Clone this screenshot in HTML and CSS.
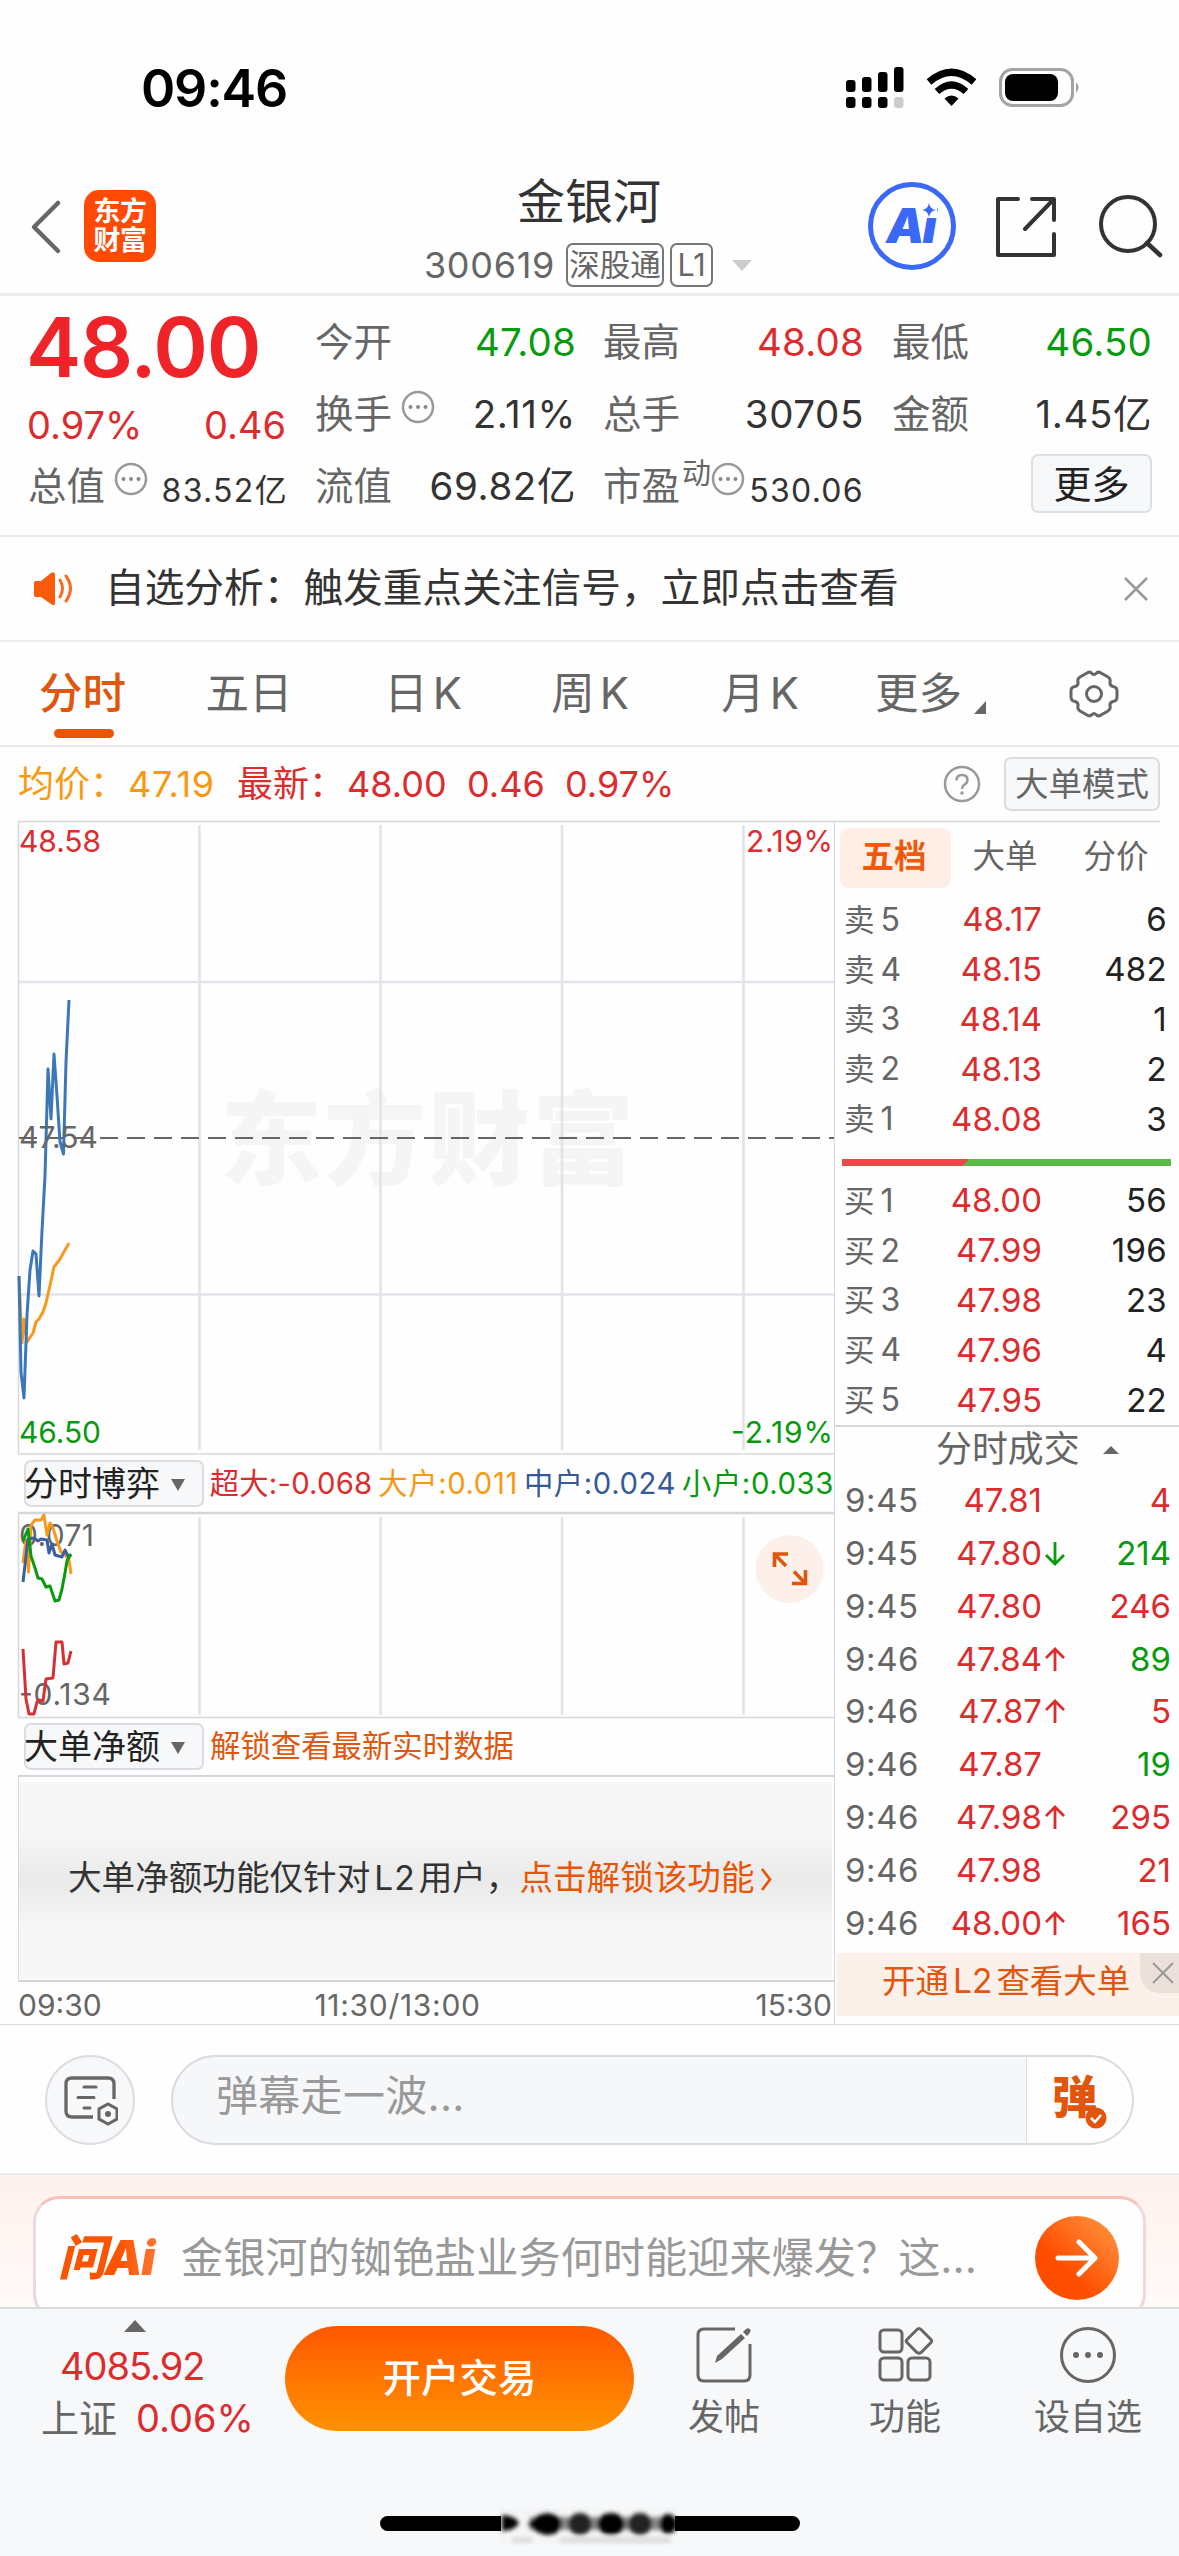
FILE: index.html
```html
<!DOCTYPE html>
<html lang="zh-CN">
<head>
<meta charset="utf-8">
<title>金银河 300619</title>
<link rel="stylesheet" href="styles.css">
</head>
<body>
<div class="status">
  <span class="clock">09:46</span>
  <svg class="status-icons" width="232" height="46" viewBox="844 65 232 46">
    <g fill="#000">
      <rect x="846" y="80" width="9.500" height="12" rx="3"/><rect x="862" y="77" width="9.500" height="15" rx="3"/><rect x="878" y="72" width="9.500" height="20" rx="3"/><rect x="894" y="67" width="9.500" height="25" rx="3"/>
      <rect x="846" y="97" width="9.500" height="11" rx="3"/><rect x="862" y="97" width="9.500" height="11" rx="3"/><rect x="878" y="97" width="9.500" height="11" rx="3"/>
      <rect x="894" y="97" width="9.500" height="11" rx="3" fill="#ccc"/>
      <path d="M951.500 106 L944.500 98.500 Q951.500 92.500 958.500 98.500Z"/>
    </g>
    <path d="M929 82 Q951.500 62.500 974 82M937 91.500 Q951.500 78.500 966 91.500" fill="none" stroke="#000" stroke-width="7"/>
    <rect x="1000.500" y="69.500" width="72" height="36" rx="12" fill="none" stroke="#a3a3a3" stroke-width="3"/>
    <rect x="1005" y="74" width="53" height="27" rx="8"/>
    <path d="M1076 82 Q1081 87.500 1076 93Z" fill="#a3a3a3"/>
  </svg>
</div>

<header class="nav">
  <svg width="32" height="56" viewBox="30 199 32 56"><path d="M58 203 L34 227 L58 251" fill="none" stroke="#666" stroke-width="4.500" stroke-linecap="round" stroke-linejoin="round"/></svg>
  <div class="brand"><span>东方</span><span>财富</span></div>
  <div class="title">
    <h1>金银河</h1>
    <div class="code"><span class="num">300619</span><span class="tag">深股通</span><span class="tag l1">L1</span><i class="tri-down light"></i></div>
  </div>
  <div class="ai-badge"><span>Ai</span>
    <svg width="14" height="14" viewBox="0 0 14 14"><path d="M7 0Q8 6 14 7Q8 8 7 14Q6 8 0 7Q6 6 7 0Z" fill="#3b69f6"/></svg>
  </div>
  <svg class="share" width="64" height="64" viewBox="994 195 64 64"><path d="M1018 199H998V255H1054V234M1032 199H1054V220M1053 200L1025 229" fill="none" stroke="#333" stroke-width="4" stroke-linecap="round" stroke-linejoin="round"/></svg>
  <svg class="search" width="66" height="66" viewBox="1097 192 66 66"><circle cx="1128" cy="224" r="27" fill="none" stroke="#333" stroke-width="4"/><path d="M1147 243L1160 255" stroke="#333" stroke-width="4.500" stroke-linecap="round"/></svg>
</header>

<section class="quote">
  <div class="main">
    <div class="price">48.00</div>
    <div class="change"><span>0.97%</span><span>0.46</span></div>
    <div class="cell cap"><span>总值</span><svg class="dots" width="34" height="34"><use href="#more"/></svg><b class="small">83.52亿</b></div>
  </div>
  <div class="col">
    <div class="cell"><span>今开</span><b class="down">47.08</b></div>
    <div class="cell"><span>换手</span><svg class="dots" width="34" height="34"><use href="#more"/></svg><b>2.11%</b></div>
    <div class="cell"><span>流值</span><b>69.82亿</b></div>
  </div>
  <div class="col">
    <div class="cell"><span>最高</span><b class="up">48.08</b></div>
    <div class="cell"><span>总手</span><b>30705</b></div>
    <div class="cell"><span>市盈</span><em>动</em><svg class="dots near" width="34" height="34"><use href="#more"/></svg><b class="small">530.06</b></div>
  </div>
  <div class="col">
    <div class="cell"><span>最低</span><b class="down">46.50</b></div>
    <div class="cell"><span>金额</span><b>1.45亿</b></div>
    <div class="cell"><button class="more">更多</button></div>
  </div>
</section>

<svg class="defs" width="0" height="0"><symbol id="more" viewBox="0 0 34 34"><circle cx="17" cy="17" r="15" fill="none" stroke="#999" stroke-width="2.500"/><g fill="#888"><circle cx="9.500" cy="17" r="2"/><circle cx="17" cy="17" r="2"/><circle cx="24.500" cy="17" r="2"/></g></symbol></svg>

<section class="notice">
  <svg width="42" height="36" viewBox="32 571 42 36"><path d="M34 583Q34 581 36 581H41L51 573Q55 571 55 575V603Q55 607 51 604L41 597H36Q34 597 34 595Z" fill="#fa5a0a"/><path d="M60 580Q65 588.500 60 597M66 576Q75 588.500 66 601" fill="none" stroke="#fa6a20" stroke-width="3" stroke-linecap="round"/></svg>
  <span>自选分析：触发重点关注信号，立即点击查看</span>
  <svg width="26" height="26" viewBox="0 0 26 26"><path d="M2 2L24 24M24 2L2 24" stroke="#999" stroke-width="2.500"/></svg>
</section>

<nav class="tabs">
  <span class="on">分时</span><span>五日</span><span>日<i>K</i></span><span>周<i>K</i></span><span>月<i>K</i></span>
  <span class="with-corner">更多<svg width="12" height="13"><path d="M12 0V13H0Z" fill="#666"/></svg></span>
  <span><svg width="52" height="48" viewBox="-26 -24 52 48"><path d="M-7 -21Q-4 -23 -2 -20.500Q0 -18.500 2 -20.500Q4 -23 7 -21L14 -17Q17 -15 16 -12Q15.500 -8.500 19 -7.500Q23 -7 23 -3V3Q23 7 19 7.500Q15.500 8.500 16 12Q17 15 14 17L7 21Q4 23 2 20.500Q0 18.500 -2 20.500Q-4 23 -7 21L-14 17Q-17 15 -16 12Q-15.500 8.500 -19 7.500Q-23 7 -23 3V-3Q-23 -7 -19 -7.500Q-15.500 -8.500 -16 -12Q-17 -15 -14 -17Z" fill="none" stroke="#666" stroke-width="3"/><circle r="7.500" fill="none" stroke="#666" stroke-width="3"/></svg></span>
</nav>

<section class="summary">
  <span class="avg">均价：</span><span class="avg v1">47.19</span>
  <span class="up">最新：</span><span class="up v2">48.00</span><span class="up v3">0.46</span><span class="up v4">0.97%</span>
  <svg class="help" width="38" height="38" viewBox="0 0 38 38"><circle cx="19" cy="19" r="17" fill="none" stroke="#999" stroke-width="2.500"/><path d="M13.500 15.500Q13.500 10 19 10Q24.500 10 24.500 15Q24.500 18 21 20Q19 21.500 19 24" fill="none" stroke="#999" stroke-width="2.500"/><circle cx="19" cy="28" r="1.700" fill="#999"/></svg>
  <button class="mode">大单模式</button>
</section>

<main class="board">
  <div class="charts">
    <svg class="chart" width="835" height="634" viewBox="0 821 835 634">
      <text class="mark" x="220" y="1177" textLength="414">东方财富</text>
      <g stroke="#e2e3ea" stroke-width="2.500"><path d="M199.500 825V1450M380.500 825V1450M562 825V1450M743.500 825V1450M19 982H834M19 1294.500H834"/></g>
      <path d="M18.500 1455V821.500H1160M18 1454H835" fill="none" stroke="#d6d8dc" stroke-width="1.500"/>
      <path d="M19 1138H834" stroke="#666" stroke-width="2" stroke-dasharray="18 9"/>
      <polyline class="line" stroke="#f79a1c" points="19,1276 22,1343 24,1319 27,1342 33,1333 36,1322 39,1319 43,1312 46,1303 51,1281 54,1267 60,1259 69,1243"/>
      <polyline class="line" stroke="#3a78b8" points="19,1276 21,1372 24,1398 27,1315 30,1270 33,1251 36,1254 39,1296 42,1231 45,1176 48,1069 51,1119 54,1054 57,1096 60,1142 63.500,1154 66,1062 69,1000"/>
      <text class="axis up" x="19" y="851.500" textLength="82">48.58</text>
      <text class="axis" x="19" y="1147.500" textLength="79">47.54</text>
      <text class="axis down" x="19" y="1443" textLength="82">46.50</text>
      <text class="axis up" x="746" y="851.500" textLength="87">2.19%</text>
      <text class="axis down" x="731" y="1443" textLength="102">-2.19%</text>
    </svg>
    <div class="legend">
      <span class="select">分时博弈<i class="tri-down"></i></span>
      <span class="up">超大:-0.068</span><span class="gold">大户:0.011</span><span class="navy">中户:0.024</span><span class="down">小户:0.033</span>
    </div>
    <svg class="chart" width="835" height="206" viewBox="0 1512 835 206">
      <path d="M18 1513H835" stroke="#d3d5d8" stroke-width="2.500"/>
      <path d="M18.500 1513V1717.500H835" fill="none" stroke="#d6d8dc" stroke-width="1.500"/>
      <path d="M199.500 1517V1715M380.500 1517V1715M562 1517V1715M743.500 1517V1715" stroke="#e2e3ea" stroke-width="2.500"/>
      <text class="axis" x="19" y="1546" textLength="75">0.071</text>
      <text class="axis" x="19" y="1704.500" textLength="92">-0.134</text>
      <polyline class="line" stroke="#f79a1c" points="23,1563 26,1540 28.500,1572 31,1525 35,1520 41,1520 44,1515 47,1535 50,1523 53,1528 57,1541 61,1552 66,1556 69,1560 71,1574"/>
      <polyline class="line" stroke="#3a60a0" points="23,1582 28,1539 34,1538 38,1541 41,1539 47,1540 49,1553 52,1544 55,1555 62,1557 65,1550 68,1556 71,1555"/>
      <polyline class="line" stroke="#0a9a10" points="23,1541 28,1529 31,1556 35,1568 38,1578 42,1579 46,1587 50,1586 55,1601 59,1600 62,1589 65,1573 67,1561 71,1554"/>
      <polyline class="line" stroke="#d63032" points="23,1649 26,1699 29,1714 34,1714 37,1702 39,1700 43,1701 46,1679 53,1678 56,1642 62,1642 64,1664 68,1663 71,1651"/>
      <circle cx="789.500" cy="1569" r="34" fill="#fdf0ea"/>
      <path d="M774.500 1567V1554H788M775 1554.500L786 1566M805.500 1570V1583.500H792M805 1583L794 1571.500" fill="none" stroke="#e0560d" stroke-width="3.600"/>
    </svg>
    <div class="legend">
      <span class="select">大单净额<i class="tri-down"></i></span>
      <span class="unlock">解锁查看最新实时数据</span>
    </div>
    <div class="locked"><div><span>大单净额功能仅针对<i>L2</i>用户，</span><a>点击解锁该功能</a><svg width="13" height="25" viewBox="0 0 13 25"><path d="M2 2L10 12.500L2 23" fill="none" stroke="#ea5504" stroke-width="2.700"/></svg></div></div>
    <div class="times"><span>09:30</span><span class="noon">11:30/13:00</span><span>15:30</span></div>
  </div>

  <aside class="panel">
    <div class="ptabs"><span class="on">五档</span><span>大单</span><span>分价</span></div>
    <div class="levels">
      <div><span>卖<i>5</i></span><b>48.17</b><u>6</u></div>
      <div><span>卖<i>4</i></span><b>48.15</b><u>482</u></div>
      <div><span>卖<i>3</i></span><b>48.14</b><u>1</u></div>
      <div><span>卖<i>2</i></span><b>48.13</b><u>2</u></div>
      <div><span>卖<i>1</i></span><b>48.08</b><u>3</u></div>
    </div>
    <div class="ratio"><svg width="329" height="7" viewBox="0 0 329 7"><path d="M0 0H329V7H0Z" fill="#5bb94a"/><path d="M0 0H127L121 7H0Z" fill="#e84a4a"/></svg></div>
    <div class="levels">
      <div><span>买<i>1</i></span><b>48.00</b><u>56</u></div>
      <div><span>买<i>2</i></span><b>47.99</b><u>196</u></div>
      <div><span>买<i>3</i></span><b>47.98</b><u>23</u></div>
      <div><span>买<i>4</i></span><b>47.96</b><u>4</u></div>
      <div><span>买<i>5</i></span><b>47.95</b><u>22</u></div>
    </div>
    <div class="deals-head"><span>分时成交</span><svg width="16" height="8"><path d="M8 0L16 8H0Z" fill="#666"/></svg></div>
    <div class="deals">
      <div><span>9:45</span><b>47.81</b><s></s><u class="up">4</u></div>
      <div><span>9:45</span><b>47.80</b><s><svg class="down" width="20" height="25"><use href="#dn"/></svg></s><u class="down">214</u></div>
      <div><span>9:45</span><b>47.80</b><s></s><u class="up">246</u></div>
      <div><span>9:46</span><b>47.84</b><s><svg class="up" width="20" height="25"><use href="#upw"/></svg></s><u class="down">89</u></div>
      <div><span>9:46</span><b>47.87</b><s><svg class="up" width="20" height="25"><use href="#upw"/></svg></s><u class="up">5</u></div>
      <div><span>9:46</span><b>47.87</b><s></s><u class="down">19</u></div>
      <div><span>9:46</span><b>47.98</b><s><svg class="up" width="20" height="25"><use href="#upw"/></svg></s><u class="up">295</u></div>
      <div><span>9:46</span><b>47.98</b><s></s><u class="up">21</u></div>
      <div><span>9:46</span><b>48.00</b><s><svg class="up" width="20" height="25"><use href="#upw"/></svg></s><u class="up">165</u></div>
    </div>
    <svg class="defs" width="0" height="0">
      <symbol id="upw" viewBox="0 0 20 25"><path d="M10 24V2M1 11L10 2L19 11" fill="none" stroke="currentColor" stroke-width="2.800"/></symbol>
      <symbol id="dn" viewBox="0 0 20 25"><path d="M10 1V23M1 14L10 23L19 14" fill="none" stroke="currentColor" stroke-width="2.800"/></symbol>
    </svg>
    <div class="promo">开通<i>L2</i>查看大单<span class="close"><svg width="22" height="22"><path d="M1 1L21 21M21 1L1 21" stroke="#999" stroke-width="2"/></svg></span></div>
  </aside>
</main>

<section class="comment">
  <div class="round"><svg width="56" height="52" viewBox="62 2075 56 52"><path d="M93 2118H72Q66 2118 66 2112V2085Q66 2079 72 2079H108Q114 2079 114 2085V2100" fill="none" stroke="#666" stroke-width="3.300"/><path d="M84 2088H96M78 2098.500H94M84 2109H90" stroke="#666" stroke-width="3" stroke-linecap="round"/><path d="M108 2105L117 2110V2120L108 2125L99 2120V2110Z" fill="none" stroke="#666" stroke-width="3"/><circle cx="108" cy="2115" r="3" fill="#666"/></svg></div>
  <div class="field">
    <span>弹幕走一波...</span>
    <div class="toggle"><b>弹</b><svg width="22" height="22" viewBox="0 0 22 22"><circle cx="11" cy="11" r="10.500" fill="#e0560d"/><path d="M6 11L10 15L16 8" fill="none" stroke="#fff" stroke-width="2.500"/></svg></div>
  </div>
</section>

<section class="ask">
  <div class="card">
    <span class="logo">问Ai</span>
    <span class="q">金银河的铷铯盐业务何时能迎来爆发？这...</span>
    <span class="go"><svg width="44" height="38" viewBox="0 0 44 38"><path d="M3 19H40M24 3L40 19L24 35" fill="none" stroke="#fff" stroke-width="5" stroke-linecap="round" stroke-linejoin="round"/></svg></span>
  </div>
</section>

<footer class="bar">
  <div class="index"><svg width="22" height="12"><path d="M11 0L22 12H0Z" fill="#666"/></svg><span class="up pts">4085.92</span><span class="row">上证<b class="up">0.06%</b></span></div>
  <button class="open">开户交易</button>
  <div class="act a1"><svg width="58" height="58" viewBox="0 0 58 58"><path d="M40 3H9Q3 3 3 9V49Q3 55 9 55H49Q55 55 55 49V18" fill="none" stroke="#666" stroke-width="3"/><path d="M20 37L22 30L46 8L50 12L27 33Z" fill="#666"/><path d="M48 6L51 3Q54 1 55.500 4Q56 6 52 10Z" fill="#666"/></svg><span>发帖</span></div>
  <div class="act a2"><svg width="58" height="58" viewBox="0 0 58 58"><g fill="none" stroke="#666" stroke-width="3"><rect x="4" y="4" width="22" height="22" rx="4"/><rect x="4" y="32" width="22" height="22" rx="4"/><rect x="32" y="32" width="22" height="22" rx="4"/><path d="M41 3.500Q43 1.500 45 3.500L55 13.500Q56.500 15 55 16.500L45 26.500Q43 28 41 26.500L31 16.500Q29.500 15 31 13.500Z"/></g></svg><span>功能</span></div>
  <div class="act a3"><svg width="58" height="58" viewBox="0 0 58 58"><circle cx="29" cy="29" r="26.500" fill="none" stroke="#666" stroke-width="3"/><g fill="#666"><circle cx="17" cy="29" r="3"/><circle cx="29" cy="29" r="3"/><circle cx="41" cy="29" r="3"/></g></svg><span>设自选</span></div>
</footer>
<div class="home">
  <svg width="422" height="44" viewBox="379 2504 422 44">
    <defs><filter id="soft" x="-20%" y="-40%" width="140%" height="180%"><feGaussianBlur stdDeviation="2"/></filter></defs>
    <rect x="380" y="2517" width="420" height="15" rx="7.500"/>
    <rect x="501" y="2509" width="174" height="36" fill="#f4f5f6"/>
    <g filter="url(#soft)"><rect x="530" y="2518" width="143" height="13" fill="#8a8a8a"/><path d="M502 2516Q516 2517 519 2524Q516 2531 502 2532Z"/><path d="M528 2525Q532 2517 547 2514Q563 2517 562 2525Q560 2536 546 2536Q533 2533 528 2525Z"/><ellipse cx="580" cy="2525" rx="12" ry="11" fill="#222"/><ellipse cx="611" cy="2525" rx="14" ry="11"/><ellipse cx="640" cy="2525" rx="12" ry="11" fill="#222"/><ellipse cx="668" cy="2525" rx="9" ry="10"/><path d="M512 2541H532M560 2541H670" stroke="#d8d9da" stroke-width="5"/></g>
  </svg>
</div>
</body>
</html>
```
FILE: styles.css
```css
* { box-sizing: border-box; }
body {
  margin: 0; width: 1179px; height: 2556px; overflow: hidden; background: #fefefe; color: #333;
  font-family: Inter, "Noto Sans CJK SC", sans-serif; font-size: 36px; line-height: 1;
  display: flex; flex-direction: column;
}
b, i, em, u, s, h1 { font-style: normal; font-weight: 400; text-decoration: none; margin: 0; }
button { font: inherit; color: inherit; padding: 0; margin: 0; white-space: nowrap; }
span, b, a { white-space: nowrap; }
svg { display: block; flex: none; }
.defs { position: absolute; }
.up { color: #dc2c2e; }
.down { color: #0a9a10; }
.gold, .avg { color: #f79a10; }
.navy { color: #365a96; }

.status { height: 160px; display: flex; justify-content: space-between; align-items: flex-start; padding: 63px 103px 0 141px; flex: none; }
.clock { font-size: 52px; line-height: 52px; font-weight: 600; color: #000; letter-spacing: -1.200px; }
.status-icons { margin-top: 2px; overflow: visible; }

.nav { height: 136px; flex: none; display: flex; align-items: flex-start; border-bottom: 3px solid #ececec; padding: 0 16px 0 30px; }
.nav > svg:first-child { margin-top: 39px; }
.brand { flex: none; width: 72px; height: 72px; margin: 30px 0 0 22px; border-radius: 15px; background: #ff4a05; color: #fff; display: flex; flex-direction: column; align-items: center; justify-content: center; font-weight: 700; font-size: 27px; line-height: 29px; }
.brand span { letter-spacing: -.5px; }
.title { width: 714px; display: flex; flex-direction: column; align-items: center; margin-right: -2px; padding-left: 158px; }
.title h1 { font-size: 48px; line-height: 56px; margin-top: 14px; padding-right: 6px; }
.code { display: flex; align-items: center; color: #666; margin-top: 13px; padding-right: 8px; height: 44px; }
.code .num { font-size: 36px; letter-spacing: .7px; margin-right: 11px; }
.tag { border: 2px solid #777; border-radius: 7px; height: 44px; line-height: 40px; font-size: 30.500px; width: 98px; text-align: center; }
.tag.l1 { width: 43px; margin-left: 6px; }
.tri-down { width: 0; height: 0; border: 7px solid transparent; border-top: 12px solid #666; border-bottom: 0; flex: none; }
.tri-down.light { border-width: 11px 10px 0; border-top-color: #ccc; margin-left: 19px; }
.ai-badge { position: relative; flex: none; width: 88px; height: 88px; border-radius: 50%; border: 5px solid #3b69f6; margin-top: 22px; display: flex; align-items: center; justify-content: center; color: #3b69f6; }
.ai-badge span { font-size: 48px; font-weight: 900; letter-spacing: -2px; font-style: italic; padding-right: 3px; }
.ai-badge svg { position: absolute; left: 49px; top: 16px; background: #fefefe; box-shadow: 0 0 0 1px #fefefe; }
.share { margin: 35px 0 0 38px; }
.search { margin: 32px 0 0 39px; }

.quote { height: 241px; flex: none; display: flex; padding: 10px 29px 0 28px; border-bottom: 2px solid #ededed; }
.main { width: 258px; }
.price { height: 79px; line-height: 79px; padding-top: 2px; margin-left: -2px; font-size: 83px; font-weight: 600; color: #ee2428; letter-spacing: -1.200px; }
.change { display: flex; justify-content: space-between; height: 65px; align-items: center; padding-top: 14px; font-size: 38px; color: #dc2c2e; margin-left: -1px; }
.col { width: 259px; margin-left: 29px; }
.col:last-child { width: 258px; margin-left: 30px; }
.cell { height: 72px; display: flex; align-items: center; color: #666; font-size: 38.500px; }
.cell b { margin-left: auto; margin-right: -2px; color: #333; font-size: 38.500px; letter-spacing: .6px; }
.cell b.up { color: #dc2c2e; letter-spacing: .2px; }
.cell b.down { color: #0a9a10; letter-spacing: .2px; }
.cell b.small { font-size: 32px; padding-top: 9px; letter-spacing: 1.300px; }
.cell em { font-size: 29px; margin: -26px 0 0 2px; }
.dots { margin: -15px 0 0 9px; }
.dots.near { margin-left: 0; margin-right: -10px; }
.more { margin: -5px -2px 0 auto; width: 121px; height: 59px; border: 2px solid #dcdfe3; border-radius: 7px; background: #f7f8fa; color: #222; font-size: 38px; line-height: 50px; }

.notice { height: 105px; flex: none; display: flex; align-items: center; padding: 0 30px 0 32px; border-bottom: 2px solid #ededed; }
.notice span { font-size: 39.700px; margin-left: 31px; margin-right: auto; }

.tabs { height: 105px; flex: none; display: grid; grid-template-columns: 167px 164px 184px 150px 190px 154px 170px; border-bottom: 2px solid #e9e9e9; font-size: 43.500px; color: #666; }
.tabs span { display: flex; align-items: center; justify-content: center; position: relative; }
.tabs i { margin-left: 5px; }
.tabs .on { color: #e0560d; font-weight: 500; padding-right: 2px; }
.tabs .on::after { content: ""; position: absolute; left: 54px; top: 87px; width: 60px; height: 9px; border-radius: 5px; background: #ea5504; }
.with-corner { padding-right: 3px; }
.with-corner svg { margin: 28px 0 0 12px; }

.summary { height: 74px; flex: none; display: flex; align-items: center; padding: 0 19px 0 18px; font-size: 36px; }
.v1 { margin-left: 2px; width: 109px; letter-spacing: .7px; }
.v2 { margin-left: 2px; width: 120px; }
.v3 { width: 98px; }
.help { margin-left: auto; margin-right: 23px; }
.mode { width: 156px; height: 54px; border: 2px solid #d9dce0; border-radius: 7px; background: #f7f8fa; color: #666; font-size: 33.500px; line-height: 46px; }

.board { height: 1204px; flex: none; display: flex; border-bottom: 1.500px solid #d6d8dc; }
.charts { width: 834px; flex: none; }
.chart { overflow: visible; }
.axis { font-size: 30px; fill: #666; }
.axis.up { fill: #dc2c2e; }
.axis.down { fill: #0a9a10; }
.mark { font-size: 102px; font-weight: 900; fill: #f5f5f6; }
.line { fill: none; stroke-width: 3; stroke-linejoin: round; }
.legend { height: 57px; display: flex; align-items: center; padding-left: 24px; font-size: 29.300px; letter-spacing: .6px; }
.select { width: 180px; height: 47px; border: 2px solid #d9dce0; border-radius: 7px; background: #f7f8fa; color: #222; font-size: 34px; display: flex; align-items: center; margin-right: 6px; letter-spacing: 0; text-indent: -2px; }
.select .tri-down { margin-left: 11px; margin-top: 3px; }
.legend .up { letter-spacing: .2px; }
.legend .gold, .legend .navy, .legend .down { margin-left: 6px; }
.legend .unlock { color: #e0560d; font-size: 30.400px; letter-spacing: 0; }
.locked { height: 207px; margin-left: 18px; border: 1.500px solid #d6d8dc; border-top: 2.500px solid #d3d5d8; border-bottom: 2.500px solid #d3d5d8; border-right: 0; padding: 5px 2px 3px 0; }
.locked > div { height: 197px; display: flex; align-items: center; padding: 0 0 6px 49px; font-size: 33.600px; background: linear-gradient(#f7f7f7 25%, #ebebeb 47%, #ebebeb 52%, #f7f7f7 75%); }
.locked i { letter-spacing: 1px; margin: 0 3px 0 4px; }
.locked a { color: #ea5504; }
.locked svg { margin: 3px 0 0 5px; }
.times { display: flex; justify-content: space-between; padding: 8px 2px 0 18px; font-size: 30px; line-height: 30px; color: #666; }
.noon { margin-right: 62px; letter-spacing: .7px; }

.panel { width: 345px; border-left: 1.500px solid #d6d8dc; }
.ptabs { display: flex; padding: 7px 0 0 5px; height: 74px; font-size: 32.500px; color: #666; }
.ptabs span { width: 111px; height: 60px; line-height: 58px; text-align: center; border-radius: 9px; padding-right: 3px; }
.ptabs .on { background: #feeee6; color: #ee5a0a; font-weight: 700; }
.levels > div { height: 49.800px; display: grid; grid-template-columns: 97px 101px 125px; align-items: center; padding-left: 9px; font-size: 33px; }
.levels span { font-size: 30.500px; color: #666; }
.levels span i { font-size: 32px; margin-left: 6px; }
.levels b { color: #dc2c2e; }
.levels b, .levels u { text-align: right; }
.levels u { color: #222; letter-spacing: .3px; }
.ratio { height: 32px; padding: 15px 0 0 7px; }
.levels + .deals-head { border-top: 2px solid #d6d8dc; }
.deals-head { height: 49px; display: flex; align-items: center; padding: 0 0 2px 101px; font-size: 35.900px; color: #666; }
.deals-head svg { margin-left: 23px; margin-top: 2px; }
.deals > div { height: 52.900px; display: grid; grid-template-columns: 97px 101px 25px 103px; align-items: center; padding-left: 10px; font-size: 33px; }
.deals b { color: #dc2c2e; }
.deals b, .deals u { text-align: right; }
.deals b { margin-right: 1px; }
.deals s { padding-left: 2px; }
.deals > div > span { color: #666; letter-spacing: .6px; }
.promo { position: relative; height: 63px; margin: 3px 0 0 2px; background: #fcf0ea; color: #e0560d; font-size: 33.500px; line-height: 56px; padding-left: 45px; }
.promo i { margin: 0 4px; }
.close { position: absolute; right: 0; top: 0; width: 39px; height: 40px; border-radius: 0 0 0 20px; background: #ece0db; display: flex; align-items: center; padding-left: 12px; }

.comment { height: 150px; flex: none; display: flex; padding: 30px 45px; border-bottom: 2px solid #ececec; }
.round { flex: none; width: 90px; height: 90px; border: 2px solid #dcdde0; border-radius: 50%; background: #f7f8fa; display: flex; align-items: center; justify-content: center; }
.field { width: 963px; height: 90px; margin-left: 36px; border: 2px solid #d9dbdf; border-radius: 45px; background: #f6f7f9; display: flex; color: #999; font-size: 42px; overflow: hidden; }
.field > span { flex: 1; padding-left: 43px; line-height: 78px; letter-spacing: .3px; }
.toggle { width: 106px; background: #fefefe; border-left: 1.500px solid #dcdde0; position: relative; }
.toggle b { display: block; font-size: 45px; font-weight: 900; color: #e0560d; padding: 18px 0 0 25px; }
.toggle svg { position: absolute; left: 58px; top: 50px; }

.ask { height: 132px; flex: none; overflow: hidden; background: linear-gradient(#fef1ed, #fffaf8); padding: 21px 33px 0; }
.card { height: 124px; border: 3px solid #f8c1b8; border-left-color: #eed9da; border-right-color: #eed9da; border-bottom-color: #dcdfe6; border-radius: 26px; background: #fefefe; display: flex; align-items: center; padding-left: 22px; }
.logo { width: 123px; font-size: 48px; font-weight: 900; font-style: italic; letter-spacing: -1.500px; background: linear-gradient(90deg, #fb5400 50%, #ff8d58); -webkit-background-clip: text; background-clip: text; color: transparent; line-height: 60px; }
.q { color: #999; font-size: 42.200px; width: 854px; }
.go { width: 84px; height: 84px; border-radius: 50%; background: linear-gradient(45deg, #ff4d00 35%, #ff9a45); display: flex; align-items: center; justify-content: center; }

.bar { height: 174px; flex: none; display: flex; background: #f7f8fa; border-top: 2px solid #d9dbe0; }
.index { width: 285px; flex: none; display: flex; flex-direction: column; padding-left: 41px; }
.index svg { margin: 11px 0 0 83px; }
.pts { margin: 15px 0 0 19px; font-size: 38px; line-height: 38px; letter-spacing: -1px; }
.row { font-size: 38px; line-height: 38px; color: #666; margin-top: 14px; }
.row b { margin-left: 19px; }
.open { flex: none; width: 349px; height: 105px; margin-top: 17px; border: 0; border-radius: 53px; background: linear-gradient(#ff5800, #ff9200); color: #fff; font-size: 38.500px; font-weight: 500; line-height: 98px; padding-bottom: 2px; }
.act { display: flex; flex-direction: column; align-items: center; width: 180px; padding-top: 17px; font-size: 36px; color: #666; }
.act span { margin-top: 15px; line-height: 36px; }
.a2 { margin-left: 1px; }
.a3 { margin-left: 3px; }
.home { flex: 1; background: #f7f8fa; display: flex; justify-content: center; padding: 22px 0 0; }
```
